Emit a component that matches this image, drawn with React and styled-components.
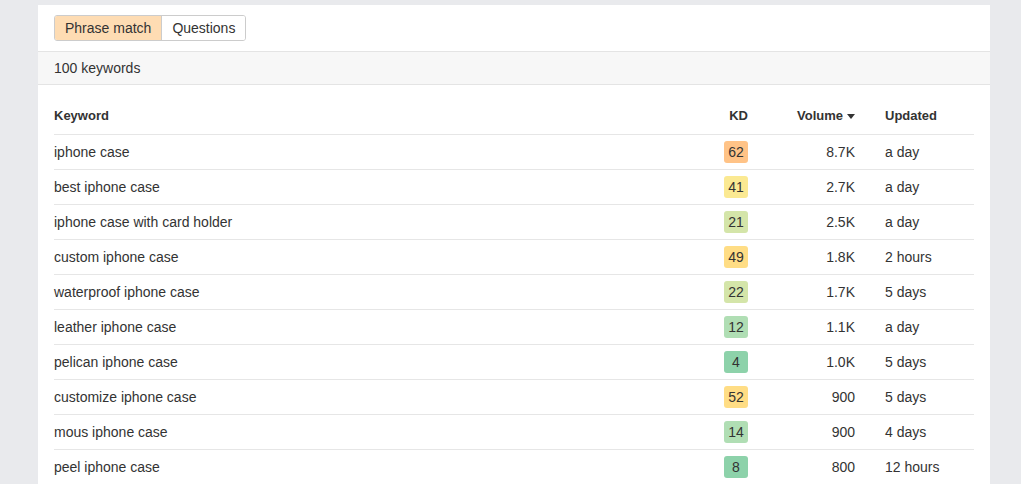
import React from 'react'
import styled, { createGlobalStyle } from 'styled-components'

const GlobalStyle = createGlobalStyle`
	body {
		margin: 0;
		background: #e9eaed;
		font-family: Arial, 'Liberation Sans', sans-serif;
		color: #333;
	}
`

const Page = styled.div`
	padding: 5px 31px 0 38px;
	height: 484px;
	box-sizing: border-box;
	overflow: hidden;
`

const Card = styled.div`
	background: #fff;
	min-height: 100%;
`

const Toolbar = styled.div`
	display: flex;
	padding: 10px 16px;
`

const ToggleGroup = styled.div`
	display: flex;
	border: 1px solid #ccc;
	border-radius: 3px;
	overflow: hidden;
`

const ToggleButton = styled.button`
	font-family: inherit;
	font-size: 14px;
	color: #333;
	height: 24px;
	padding: 0 10px;
	border: none;
	border-left: ${(props) => (props.first ? 'none' : '1px solid #ccc')};
	background: ${(props) => (props.active ? '#fedcb3' : '#fff')};
	cursor: pointer;
`

const CountBar = styled.div`
	background: #f7f7f7;
	border-top: 1px solid #e4e4e4;
	border-bottom: 1px solid #e4e4e4;
	padding: 0 16px;
	height: 32px;
	display: flex;
	align-items: center;
	font-size: 14px;
`

const Table = styled.div`
	padding: 12px 16px 0;
`

const Row = styled.div`
	display: grid;
	grid-template-columns: 1fr 60px 107px 119px;
	align-items: center;
	height: ${(props) => (props.head ? '37px' : '34px')};
	border-bottom: 1px solid #e6e6e6;
	font-size: ${(props) => (props.head ? '13px' : '14px')};
	font-weight: ${(props) => (props.head ? 'bold' : 'normal')};
`

const Cell = styled.div`
	text-align: ${(props) => props.align || 'left'};
	padding-left: ${(props) => (props.pad ? '30px' : '0')};
	white-space: nowrap;
`

const Badge = styled.span`
	display: inline-flex;
	align-items: center;
	justify-content: center;
	width: 24px;
	height: 22px;
	border-radius: 3px;
	background: ${(props) => props.color};
	font-size: 14px;
	color: #333;
`

const SortArrow = styled.span`
	display: inline-block;
	width: 0;
	height: 0;
	margin-left: 4px;
	vertical-align: middle;
	border-left: 4px solid transparent;
	border-right: 4px solid transparent;
	border-top: 5px solid #333;
`

const kdColor = (kd) => {
	if (kd >= 60) return '#ffc387'
	if (kd >= 45) return '#ffdd85'
	if (kd >= 30) return '#fbe992'
	if (kd >= 20) return '#d4e5a9'
	if (kd >= 10) return '#b0deb4'
	return '#8dd2aa'
}

const rows = [
	['iphone case', 62, '8.7K', 'a day'],
	['best iphone case', 41, '2.7K', 'a day'],
	['iphone case with card holder', 21, '2.5K', 'a day'],
	['custom iphone case', 49, '1.8K', '2 hours'],
	['waterproof iphone case', 22, '1.7K', '5 days'],
	['leather iphone case', 12, '1.1K', 'a day'],
	['pelican iphone case', 4, '1.0K', '5 days'],
	['customize iphone case', 52, '900', '5 days'],
	['mous iphone case', 14, '900', '4 days'],
	['peel iphone case', 8, '800', '12 hours'],
]

const App = () => {
	return (
		<>
			<GlobalStyle />
			<Page>
				<Card>
					<Toolbar>
						<ToggleGroup>
							<ToggleButton first active>
								Phrase match
							</ToggleButton>
							<ToggleButton>Questions</ToggleButton>
						</ToggleGroup>
					</Toolbar>
					<CountBar>100 keywords</CountBar>
					<Table>
						<Row head>
							<Cell>Keyword</Cell>
							<Cell align="right">KD</Cell>
							<Cell align="right">
								Volume
								<SortArrow />
							</Cell>
							<Cell pad>Updated</Cell>
						</Row>
						{rows.map(([keyword, kd, volume, updated]) => (
							<Row key={keyword}>
								<Cell>{keyword}</Cell>
								<Cell align="right">
									<Badge color={kdColor(kd)}>{kd}</Badge>
								</Cell>
								<Cell align="right">{volume}</Cell>
								<Cell pad>{updated}</Cell>
							</Row>
						))}
					</Table>
				</Card>
			</Page>
		</>
	)
}

export default App
